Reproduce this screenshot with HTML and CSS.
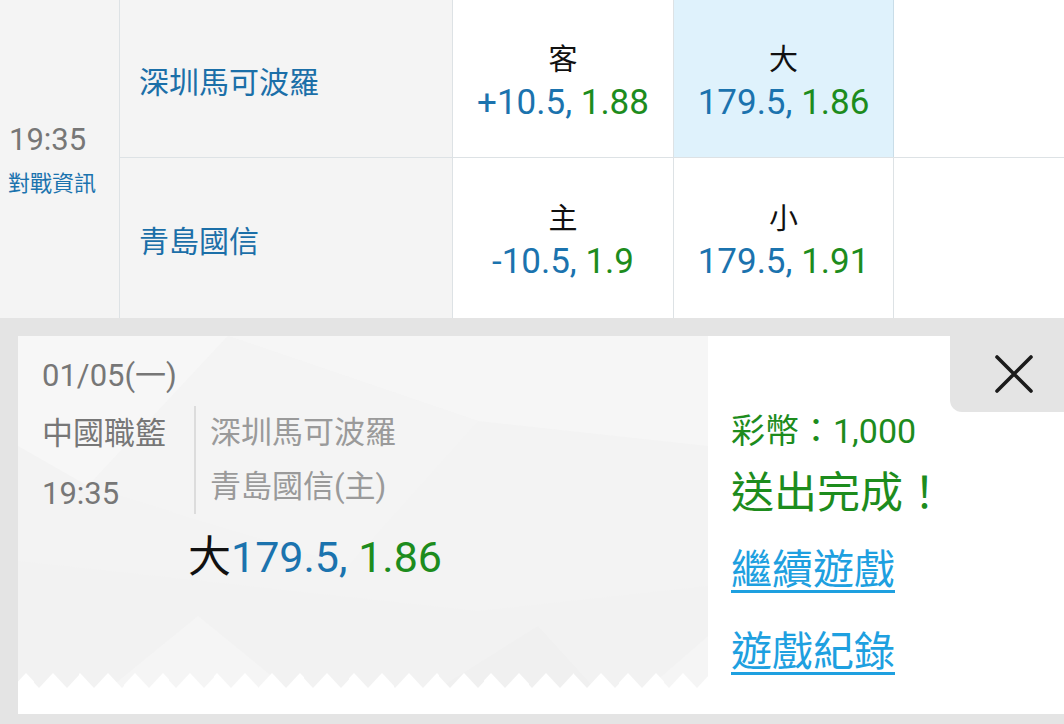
FILE: index.html
```html
<!DOCTYPE html>
<html lang="zh-Hant">
<head>
<meta charset="utf-8">
<title>投注完成</title>
<link rel="stylesheet" href="styles.css">
</head>
<body>
<div class="board">
  <div class="timecol">
    <div class="time">19:35</div>
    <a class="vs">對戰資訊</a>
  </div>
  <div class="rows">
    <div class="row first">
      <div class="team">深圳馬可波羅</div>
      <div class="odd w1"><div class="lbl">客</div><div class="val"><span class="b">+10.5,</span> <span class="g">1.88</span></div></div>
      <div class="odd w2 sel"><div class="lbl">大</div><div class="val"><span class="b">179.5,</span> <span class="g">1.86</span></div></div>
      <div class="odd rest"></div>
    </div>
    <div class="row second">
      <div class="team">青島國信</div>
      <div class="odd w1"><div class="lbl">主</div><div class="val"><span class="b">-10.5,</span> <span class="g">1.9</span></div></div>
      <div class="odd w2"><div class="lbl">小</div><div class="val"><span class="b">179.5,</span> <span class="g">1.91</span></div></div>
      <div class="odd rest"></div>
    </div>
  </div>
</div>

<div class="panel">
  <div class="ticket">
    <div class="tcontent">
      <div class="date">01/05(一)</div>
      <div class="info-row">
        <div class="league">
          <div>中國職籃</div>
          <div>19:35</div>
        </div>
        <div class="teams">
          <div>深圳馬可波羅</div>
          <div>青島國信(主)</div>
        </div>
      </div>
      <div class="pick"><span class="k">大</span><span class="b">179.5,</span> <span class="g">1.86</span></div>
    </div>
    <div class="zig"></div>
    <div class="foot"></div>
  </div>
  <div class="result">
    <div class="coin">彩幣：1,000</div>
    <div class="done">送出完成！</div>
    <a class="link first-link" href="#">繼續遊戲</a>
    <a class="link" href="#">遊戲紀錄</a>
    <div class="close">
      <svg width="40" height="40" viewBox="0 0 40 40"><path d="M3 3 L37 37 M37 3 L3 37" stroke="#1b1b1b" stroke-width="3.6" stroke-linecap="round" fill="none"/></svg>
    </div>
  </div>
</div>
</body>
</html>
```

FILE: styles.css
```css
html, body {
  margin: 0;
  padding: 0;
}
body {
  width: 1064px;
  height: 724px;
  overflow: hidden;
  background: #e4e4e4;
  font-family: Roboto, "Noto Sans CJK TC", sans-serif;
  color: #111;
}

.b { color: #1b73ae; }
.g { color: #1d8c1d; }
.k { color: #111; }

/* top board */
.board {
  display: flex;
  height: 318px;
  background: #f4f4f4;
}
.timecol {
  width: 120px;
  box-sizing: border-box;
  border-right: 1px solid #dde2e5;
  display: flex;
  flex-direction: column;
  justify-content: center;
  padding-left: 9px;
  padding-top: 2px;
}
.time {
  font-size: 31px;
  line-height: 36px;
  color: #777;
}
.vs {
  font-size: 22px;
  line-height: 30px;
  color: #1b73ae;
  margin-top: 11px;
  margin-left: -1px;
}
.rows {
  flex: 1;
  display: flex;
  flex-direction: column;
}
.row {
  display: flex;
}
.row.first {
  height: 158px;
  box-sizing: border-box;
  border-bottom: 1px solid #dde2e5;
}
.row.second {
  height: 160px;
}
.team {
  width: 333px;
  box-sizing: border-box;
  border-right: 1px solid #dde2e5;
  display: flex;
  align-items: center;
  padding-left: 19px;
  font-size: 30px;
  color: #1b6fa8;
  padding-top: 2px;
}
.odd {
  background: #fff;
  box-sizing: border-box;
  border-right: 1px solid #dde2e5;
  display: flex;
  flex-direction: column;
  align-items: center;
  justify-content: center;
  padding-top: 8px;
}
.odd.w1 { width: 221px; }
.odd.w2 { width: 220px; }
.odd.rest { flex: 1; border-right: 0; }
.odd.sel {
  background: #dff2fc;
  border-right-color: #c9dde8;
}
.lbl {
  font-size: 29px;
  line-height: 40px;
  color: #111;
}
.val {
  font-size: 35px;
  line-height: 46px;
  white-space: nowrap;
}

/* result panel */
.panel {
  display: flex;
  height: 378px;
  margin: 18px 0 0 18px;
  position: relative;
}
.ticket {
  width: 690px;
  display: flex;
  flex-direction: column;
  background-color: #f3f3f3;
  background-image: url("data:image/svg+xml,%3Csvg xmlns='http://www.w3.org/2000/svg' width='690' height='378'%3E%3Cpolygon points='0,0 210,0 70,150 0,110' fill='rgb(247,247,247)'/%3E%3Cpolygon points='210,0 690,0 690,110 460,85' fill='rgb(246,246,246)'/%3E%3Cpolygon points='70,150 210,0 460,85 330,230' fill='rgb(244,244,244)'/%3E%3Cpolygon points='0,225 460,275 690,250 690,378 0,378' fill='rgb(242,242,242)'/%3E%3Cpolygon points='60,378 180,280 300,378' fill='rgb(245,245,245)'/%3E%3Cpolygon points='380,378 520,290 600,378' fill='rgb(240,240,240)'/%3E%3Cpolygon points='600,378 690,300 690,378' fill='rgb(245,245,245)'/%3E%3C/svg%3E");
  background-repeat: no-repeat;
}
.tcontent {
  padding: 20px 0 0 24px;
}
.date {
  font-size: 31px;
  line-height: 40px;
  color: #777;
}
.info-row {
  display: flex;
  margin-top: 10px;
}
.league {
  width: 152px;
  font-size: 31px;
  line-height: 60px;
  color: #777;
  margin-top: -2px;
}
.teams {
  border-left: 2px solid #dcdcdc;
  padding-left: 14px;
  font-size: 31px;
  line-height: 54px;
  color: #9a9a9a;
  height: 108px;
}
.pick {
  margin-left: 146px;
  margin-top: 4px;
  font-size: 43px;
  line-height: 58px;
  white-space: nowrap;
}
.zig {
  margin-top: auto;
  height: 15px;
  background-image: url("data:image/svg+xml,%3Csvg xmlns='http://www.w3.org/2000/svg' width='27.4' height='15'%3E%3Cpath d='M0 15 L13.7 0 L27.4 15Z' fill='white'/%3E%3C/svg%3E");
  background-repeat: repeat-x;
  background-position: -6px 0;
}
.foot {
  height: 26px;
  background: #fff;
}

.result {
  flex: 1;
  background: #fff;
  position: relative;
  padding: 73px 0 0 23px;
  display: flex;
  flex-direction: column;
  align-items: flex-start;
}
.coin {
  font-size: 34px;
  line-height: 44px;
  color: #1d8c1d;
}
.done {
  font-size: 43px;
  line-height: 56px;
  color: #1d8c1d;
  margin-top: 12px;
}
.link {
  font-size: 41px;
  line-height: 56px;
  color: #1ea0e0;
  text-decoration: underline;
  text-decoration-thickness: 3px;
  text-underline-offset: 6px;
  margin-top: 26px;
}
.link.first-link {
  margin-top: 21px;
}
.close {
  position: absolute;
  top: 0;
  right: 0;
  width: 114px;
  height: 76px;
  box-sizing: border-box;
  padding-left: 14px;
  background: #e4e4e4;
  border-bottom-left-radius: 12px;
  display: flex;
  align-items: center;
  justify-content: center;
}
```
